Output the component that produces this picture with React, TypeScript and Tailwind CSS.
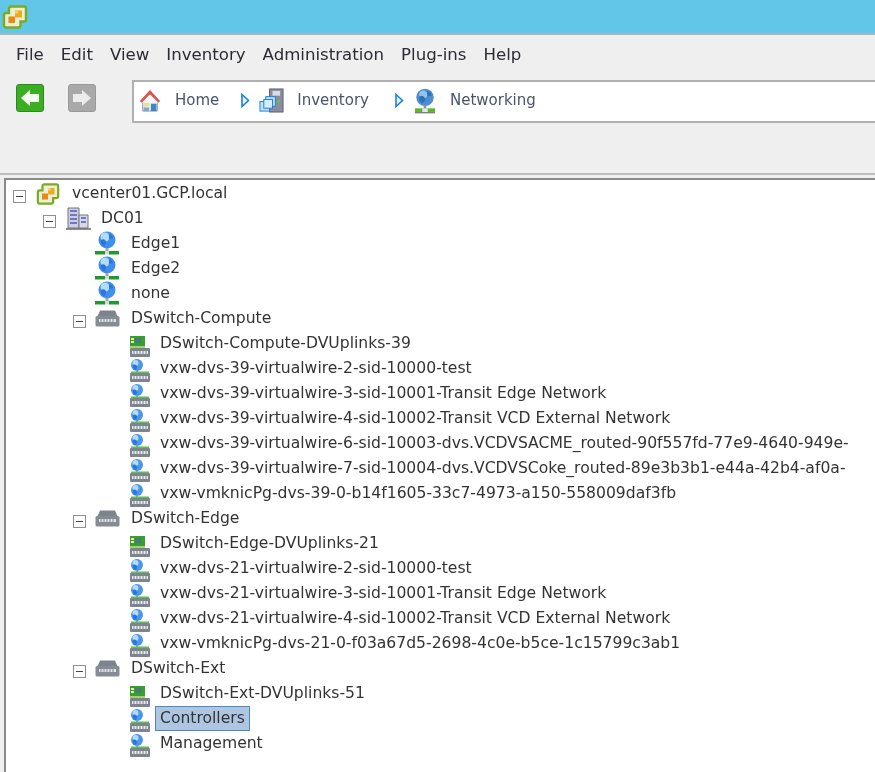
import React from "react";

const VLogo = ({ s = 26 }: { s?: number }) => (
  <svg width={s} height={s} viewBox="0 0 26 26" className="shrink-0">
    <path d="M9 2.500h13a2 2 0 0 1 2 2v11a2 2 0 0 1-2 2h-3.500v4a2 2 0 0 1-2 2H4a2 2 0 0 1-2-2V11a2 2 0 0 1 2-2h3V4.500a2 2 0 0 1 2-2z" fill="#e9efd8" stroke="#7cab1e" strokeWidth="2.400" />
    <rect x="13" y="6.500" width="7" height="7" fill="#f0a81c" />
    <rect x="6.500" y="12.500" width="6.500" height="6.500" fill="#e88a10" />
    <rect x="13" y="6.500" width="3" height="3" fill="#f8d060" />
  </svg>
);

const Home = () => (
  <svg width="22" height="26" viewBox="0 0 24 26" className="shrink-0">
    <path d="M4 12h16v12H4z" fill="#e8eef2" stroke="#8a97a6" />
    <path d="M1 13 12 1l11 12-2 2-9-9-9 9z" fill="#d9534f" />
    <path d="M12 6l9 9H3z" fill="#f4f6f8" />
    <rect x="5" y="15" width="6" height="4" fill="#f1dc8f" />
    <rect x="13" y="16" width="6" height="8" fill="#3f85c4" />
    <rect x="5" y="20" width="6" height="4" fill="#7fa9cc" />
  </svg>
);

const Inv = () => (
  <svg width="25" height="25" viewBox="0 0 26 26" className="shrink-0">
    <rect x="11" y="1" width="14" height="24" fill="#8a8d9c" stroke="#5d6070" />
    <rect x="14" y="3" width="8" height="5" fill="#d8dbe4" />
    <rect x="19" y="13" width="3" height="2" fill="#66c83c" />
    <rect x="7" y="9" width="10" height="10" fill="#bfe0f7" stroke="#1b80d8" />
    <rect x="1" y="14" width="10" height="10" fill="#bfe0f7" stroke="#1b80d8" />
    <rect x="5" y="12" width="9" height="9" fill="#d6ecfb" stroke="#1b80d8" />
  </svg>
);

const Globe = () => (
  <svg width="22" height="26" viewBox="0 0 24 28" className="shrink-0">
    <circle cx="12" cy="10" r="9.500" fill="#4a8ed0" />
    <circle cx="10" cy="7" r="4.500" fill="#8ec5f2" />
    <path d="M6 9c3-2 5 0 6 2s-1 5-3 5-4-4-3-7zM14 3c3 0 5 2 5 5l-4 1z" fill="#2f6fb4" />
    <rect x="10.500" y="19" width="3" height="4" fill="#8d9299" />
    <rect x="1" y="22" width="22" height="4" fill="#5bb531" />
    <rect x="9" y="22" width="6" height="4" fill="#e6e6e6" />
    <rect x="1" y="26" width="22" height="1.500" fill="#7b8087" />
  </svg>
);

const NetGlobe = () => (
  <svg width="24" height="25" viewBox="0 0 24 25" className="shrink-0">
    <circle cx="12" cy="9" r="8.500" fill="#3f8ff0" />
    <circle cx="10" cy="6" r="4.500" fill="#b4dcfa" />
    <path d="M6 9c3-2 5 0 5 2s-1 4-2 4-4-3-3-6zM14 3c2 0 4 2 4 4l-4 1z" fill="#2a76dc" />
    <rect x="10.500" y="17" width="3" height="4" fill="#a0a5ab" />
    <rect x="0" y="20" width="10" height="3.500" fill="#1f9a2e" />
    <rect x="14" y="20" width="10" height="3.500" fill="#1f9a2e" />
    <rect x="10" y="20" width="4" height="3.500" fill="#d8d8d8" />
  </svg>
);

const Switch = () => (
  <svg width="25" height="17" viewBox="0 0 25 17" className="shrink-0">
    <path d="M5 0.500h15l3 7H2z" fill="#7d848d" />
    <rect x="0.500" y="6" width="24" height="10.500" rx="1.500" fill="#858c95" />
    <path d="M4 9h17v3H4z" fill="#dfe2e5" />
    <path d="M6 9v3M9 9v3M12 9v3M15 9v3M18 9v3" stroke="#858c95" />
  </svg>
);

const Mini = () => (
  <>
    <rect x="0" y="17" width="20" height="9" fill="#7d848d" rx="1" />
    <rect x="2" y="20" width="16" height="3" fill="#e8eaec" />
    <path d="M4 20v3M7 20v3M10 20v3M13 20v3M16 20v3" stroke="#7d848d" />
  </>
);

const Uplink = () => (
  <svg width="20" height="26" viewBox="0 0 20 26" className="shrink-0">
    <rect x="0" y="5" width="15" height="10" fill="#35a02c" />
    <rect x="5" y="7" width="6" height="5" fill="#4a7a80" />
    <rect x="1" y="7" width="3" height="2" fill="#ecec9a" />
    <rect x="1" y="10" width="3" height="2" fill="#ecec9a" />
    <rect x="0" y="15" width="15" height="2" fill="#a8cf78" />
    <Mini />
  </svg>
);

const Pg = () => (
  <svg width="20" height="26" viewBox="0 0 20 26" className="shrink-0">
    <circle cx="7" cy="9" r="6" fill="#4a96ea" />
    <circle cx="5.500" cy="7" r="3" fill="#b4dcfa" />
    <path d="M3 9c2-1 4 0 4 2s-1 3-2 3-3-3-2-5z" fill="#2a76dc" />
    <rect x="6" y="15" width="2" height="2" fill="#a0a5ab" />
    <rect x="1" y="15.500" width="18" height="1.500" fill="#5cc04a" />
    <Mini />
  </svg>
);

const Toggle = () => (
  <span className="mt-[6px] flex h-[13px] w-[13px] shrink-0 items-center justify-center border border-[#8f8f8f] bg-white">
    <span className="h-px w-[7px] bg-[#444]" />
  </span>
);

const Sw = ({ name }: { name: string }) => (
  <div className="flex h-[25px] items-center pl-[67px]">
    <Toggle />
    <span className="ml-[9px] flex w-[36px] shrink-0"><Switch /></span>
    <span>{name}</span>
  </div>
);

const Net = ({ name }: { name: string }) => (
  <div className="flex h-[25px] items-center pl-[89px]">
    <span className="flex w-[36px] shrink-0"><NetGlobe /></span>
    <span>{name}</span>
  </div>
);

const Leaf = ({ name, uplink, sel }: { name: string; uplink?: boolean; sel?: boolean }) => (
  <div className="flex h-[25px] items-center pl-[124px]">
    <span className="flex w-[25px] shrink-0">{uplink ? <Uplink /> : <Pg />}</span>
    <span className={sel ? "border border-[#4f88bd] bg-[#aec6e2] px-[4px] leading-[23px]" : "px-[5px]"}>{name}</span>
  </div>
);

const menu = ["File", "Edit", "View", "Inventory", "Administration", "Plug-ins", "Help"];

export default function App() {
  return (
    <div className="h-[772px] w-[875px] overflow-hidden bg-[#efefef] font-['DejaVu_Sans',sans-serif] text-[15.6px] text-[#333] blur-[0.4px]">
      <div className="flex h-[35px] items-start border-b-2 border-[#9fb9c4] bg-[#62c6e8] pl-[2px] pt-[4px]">
        <VLogo />
      </div>
      <div className="flex h-[40px] items-center gap-[17px] pl-[16px] text-[16.6px] text-[#2b2b33]">
        {menu.map((m) => <span key={m}>{m}</span>)}
      </div>
      <div className="flex h-[48px] items-start">
        <div className="ml-[16px] mt-[9px] flex h-[28px] w-[28px] items-center justify-center rounded-[3px] border border-[#2b8a1c] bg-[#3cae24]">
          <svg width="20" height="18" viewBox="0 0 20 18"><path d="M1 9 10 1v4h9v8h-9v4z" fill="#f4fbf0" /></svg>
        </div>
        <div className="ml-[24px] mt-[9px] flex h-[28px] w-[28px] items-center justify-center rounded-[3px] border border-[#999] bg-[#a9a9a9]">
          <svg width="20" height="18" viewBox="0 0 20 18"><path d="M19 9 10 1v4H1v8h9v4z" fill="#ececec" /></svg>
        </div>
        <div className="ml-[36px] mt-[5px] flex h-[43px] flex-1 items-center border-y-2 border-l-2 border-[#b0b0b0] bg-white pb-[2px] pl-[5px] text-[15px] text-[#48556f]">
          <Home />
          <span className="ml-[14px]">Home</span>
          <svg width="9" height="15" viewBox="0 0 9 15" className="ml-[22px]"><path d="M1 1.500 7.500 7.500 1 13.500z" fill="#e8f3ff" stroke="#1b80e8" strokeWidth="1.600" /></svg>
          <span className="ml-[9px] flex"><Inv /></span>
          <span className="ml-[13px]">Inventory</span>
          <svg width="9" height="15" viewBox="0 0 9 15" className="ml-[26px]"><path d="M1 1.500 7.500 7.500 1 13.500z" fill="#e8f3ff" stroke="#1b80e8" strokeWidth="1.600" /></svg>
          <span className="ml-[10px] flex"><Globe /></span>
          <span className="ml-[14px]">Networking</span>
        </div>
      </div>
      <div className="mt-[50px] h-[5px] border-t-2 border-[#bdbdbd]" />
      <div className="ml-[4px] h-[600px] border-l-2 border-t-2 border-[#8a8a8a] bg-white pt-px">
        <div className="flex h-[25px] items-center pl-[7px]">
          <Toggle />
          <span className="ml-[10px] w-[36px] shrink-0"><VLogo s={24} /></span>
          <span>vcenter01.GCP.local</span>
        </div>
        <div className="flex h-[25px] items-center pl-[37px]">
          <Toggle />
          <span className="ml-[10px] w-[35px] shrink-0">
            <svg width="25" height="25" viewBox="0 0 25 25">
              <path d="M2 2h11v20H2z" fill="#c9cde6" stroke="#777" />
              <path d="M13 9h9v13h-9z" fill="#d7d9ea" stroke="#777" />
              <path d="M4 5h7M4 9h7M4 13h7M4 17h7M15 12h5M15 16h5" stroke="#6f78c0" strokeWidth="2" />
              <path d="M0 23h25" stroke="#666" strokeWidth="1.500" />
            </svg>
          </span>
          <span>DC01</span>
        </div>
        <Net name="Edge1" />
        <Net name="Edge2" />
        <Net name="none" />
        <Sw name="DSwitch-Compute" />
        <Leaf uplink name="DSwitch-Compute-DVUplinks-39" />
        <Leaf name="vxw-dvs-39-virtualwire-2-sid-10000-test" />
        <Leaf name="vxw-dvs-39-virtualwire-3-sid-10001-Transit Edge Network" />
        <Leaf name="vxw-dvs-39-virtualwire-4-sid-10002-Transit VCD External Network" />
        <Leaf name="vxw-dvs-39-virtualwire-6-sid-10003-dvs.VCDVSACME_routed-90f557fd-77e9-4640-949e-" />
        <Leaf name="vxw-dvs-39-virtualwire-7-sid-10004-dvs.VCDVSCoke_routed-89e3b3b1-e44a-42b4-af0a-" />
        <Leaf name="vxw-vmknicPg-dvs-39-0-b14f1605-33c7-4973-a150-558009daf3fb" />
        <Sw name="DSwitch-Edge" />
        <Leaf uplink name="DSwitch-Edge-DVUplinks-21" />
        <Leaf name="vxw-dvs-21-virtualwire-2-sid-10000-test" />
        <Leaf name="vxw-dvs-21-virtualwire-3-sid-10001-Transit Edge Network" />
        <Leaf name="vxw-dvs-21-virtualwire-4-sid-10002-Transit VCD External Network" />
        <Leaf name="vxw-vmknicPg-dvs-21-0-f03a67d5-2698-4c0e-b5ce-1c15799c3ab1" />
        <Sw name="DSwitch-Ext" />
        <Leaf uplink name="DSwitch-Ext-DVUplinks-51" />
        <Leaf sel name="Controllers" />
        <Leaf name="Management" />
      </div>
    </div>
  );
}
